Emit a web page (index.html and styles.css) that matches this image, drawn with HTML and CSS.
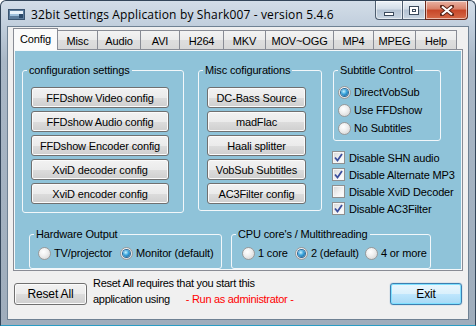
FILE: index.html
```html
<!DOCTYPE html>
<html>
<head>
<meta charset="utf-8">
<link rel="stylesheet" href="styles.css">
</head>
<body>
<div class="window">
  <div class="titlebar">
    <svg class="appicon" width="17" height="11" viewBox="0 0 17 11">
      <rect x="0.5" y="0.5" width="16" height="10" fill="#5c7c9c" stroke="#3a5470"/>
      <rect x="2" y="2" width="13" height="3" fill="#e8f2fb"/>
      <rect x="2" y="5" width="9" height="2" fill="#9fc0dc"/>
      <rect x="11" y="5" width="4" height="4" fill="#2c4a6a"/>
    </svg>
    <span class="title">32bit Settings Application by Shark007 - version 5.4.6</span>
    <div class="caption">
      <span class="cbtn cmin"><i></i></span>
      <span class="cbtn cmax"><i></i></span>
      <span class="cbtn cclose">
        <svg width="14" height="11" viewBox="0 0 14 11"><path d="M2 1.5 L12 9.5 M12 1.5 L2 9.5" stroke="#5a2418" stroke-width="4" stroke-linecap="square"/><path d="M2 1.5 L12 9.5 M12 1.5 L2 9.5" stroke="#fff" stroke-width="2.2"/></svg>
      </span>
    </div>
  </div>
  <div class="client">
    <div class="tabs">
      <span class="tab active">Config</span>
      <span class="tab">Misc</span>
      <span class="tab">Audio</span>
      <span class="tab">AVI</span>
      <span class="tab">H264</span>
      <span class="tab">MKV</span>
      <span class="tab">MOV~OGG</span>
      <span class="tab">MP4</span>
      <span class="tab">MPEG</span>
      <span class="tab">Help</span>
    </div>
    <div class="page">
      <div class="row1">
        <fieldset class="group g-config">
          <legend>configuration settings</legend>
          <div class="btnstack">
            <span class="btn">FFDshow Video config</span>
            <span class="btn">FFDshow Audio config</span>
            <span class="btn">FFDshow Encoder config</span>
            <span class="btn">XviD decoder config</span>
            <span class="btn">XviD encoder config</span>
          </div>
        </fieldset>
        <fieldset class="group g-misc">
          <legend>Misc cofigurations</legend>
          <div class="btnstack">
            <span class="btn">DC-Bass Source</span>
            <span class="btn">madFlac</span>
            <span class="btn">Haali splitter</span>
            <span class="btn">VobSub Subtitles</span>
            <span class="btn">AC3Filter config</span>
          </div>
        </fieldset>
        <div class="rightcol">
          <fieldset class="group g-sub">
            <legend>Subtitle Control</legend>
            <div class="radiolist">
              <label class="opt"><span class="radio on"></span>DirectVobSub</label>
              <label class="opt"><span class="radio"></span>Use FFDshow</label>
              <label class="opt"><span class="radio"></span>No Subtitles</label>
            </div>
          </fieldset>
          <div class="checklist">
            <label class="chkopt"><span class="chk on"><svg width="11" height="11" viewBox="0 0 11 11"><path d="M2 5.5 L4.5 8.5 L9 2" fill="none" stroke="#3b4f9e" stroke-width="1.8"/></svg></span>Disable SHN audio</label>
            <label class="chkopt"><span class="chk on"><svg width="11" height="11" viewBox="0 0 11 11"><path d="M2 5.5 L4.5 8.5 L9 2" fill="none" stroke="#3b4f9e" stroke-width="1.8"/></svg></span>Disable Alternate MP3</label>
            <label class="chkopt"><span class="chk"></span>Disable XviD Decoder</label>
            <label class="chkopt"><span class="chk on"><svg width="11" height="11" viewBox="0 0 11 11"><path d="M2 5.5 L4.5 8.5 L9 2" fill="none" stroke="#3b4f9e" stroke-width="1.8"/></svg></span>Disable AC3Filter</label>
          </div>
        </div>
      </div>
      <div class="row2">
        <fieldset class="group g-hw">
          <legend>Hardware Output</legend>
          <div class="radiorow">
            <label class="opt w-tv"><span class="radio"></span>TV/projector</label>
            <label class="opt"><span class="radio on"></span>Monitor (default)</label>
          </div>
        </fieldset>
        <fieldset class="group g-cpu">
          <legend>CPU core's / Multithreading</legend>
          <div class="radiorow">
            <label class="opt w-1core"><span class="radio"></span>1 core</label>
            <label class="opt w-2core"><span class="radio on"></span>2 (default)</label>
            <label class="opt"><span class="radio"></span>4 or more</label>
          </div>
        </fieldset>
      </div>
    </div>
    <div class="bottom">
      <span class="btn reset">Reset All</span>
      <div class="note">
        <div>Reset All requires that you start this</div>
        <div>application using<span class="red">- Run as administrator -</span></div>
      </div>
      <span class="btn exit">Exit</span>
    </div>
  </div>
</div>
</body>
</html>
```
FILE: styles.css
```css
* { box-sizing: border-box; }
html, body { margin: 0; padding: 0; }
body {
  width: 476px;
  height: 326px;
  overflow: hidden;
  background: #ffffff;
  font-family: "Liberation Sans", Arial, sans-serif;
  font-size: 11px;
  letter-spacing: -0.15px;
  color: #000;
}
.window {
  width: 476px;
  height: 326px;
  border: 1px solid #34465a;
  border-bottom-color: #2a9cc4;
  border-radius: 6px 6px 0 0;
  background: linear-gradient(to bottom, #d3dde8 0px, #c3d0de 22px, #a9b7c6 60px, #9fadbc 100%);
  display: flex;
  flex-direction: column;
}
.titlebar {
  height: 26px;
  display: flex;
  align-items: center;
  padding-left: 7px;
}
.appicon { flex: none; margin-top: 1px; }
.title {
  font-family: "Open Sans", "Noto Sans", sans-serif;
  font-size: 12px;
  margin-left: 6px;
  color: #000;
  white-space: nowrap;
  letter-spacing: 0.15px;
}
.caption {
  margin-left: auto;
  margin-right: 7px;
  align-self: flex-start;
  display: flex;
}
.cbtn {
  height: 19px;
  display: flex;
  align-items: center;
  justify-content: center;
  border: 1px solid #4e5e70;
  border-top: none;
  background: linear-gradient(to bottom, #eef3f8 0%, #d2dde8 45%, #b4c3d3 50%, #c8d5e2 100%);
  box-shadow: inset 0 0 0 1px rgba(255,255,255,0.55);
}
.cmin { width: 27px; border-radius: 0 0 0 4px; border-right: none; }
.cmax { width: 23px; border-right: none; }
.cclose {
  width: 43px;
  border-radius: 0 0 4px 0;
  border-color: #6a2a1c;
  background: linear-gradient(to bottom, #eab3a4 0%, #d98068 45%, #c64628 50%, #d66a48 100%);
}
.cmin i {
  display: block;
  width: 10px;
  height: 4px;
  margin-top: 7px;
  background: #fff;
  border: 1px solid #3b4a5c;
}
.cmax i {
  display: block;
  width: 10px;
  height: 9px;
  background: #fff;
  border: 1px solid #3b4a5c;
  box-shadow: inset 0 0 0 2px #fff, inset 0 0 0 3px #3b4a5c;
  margin-top: 1px;
}
.cclose svg { margin-top: 1px; }

.client {
  margin: 0 7px 0 7px;
  height: 292px;
  background: #f0f0f0;
  box-shadow: 0 0 0 1px #6f8193;
  padding-top: 1px;
  display: flex;
  flex-direction: column;
}
.tabs {
  display: grid;
  grid-template-columns: 45px 40px 43px 39px 44px 42px 68px 40px 42px 41px;
  height: 21px;
  align-items: end;
  padding-left: 5px;
}
.tab {
  height: 19px;
  border: 1px solid #898c95;
  border-bottom: none;
  border-left: none;
  background: linear-gradient(to bottom, #f3f3f3 0%, #ebebeb 50%, #dedede 51%, #d8d8d8 100%);
  display: flex;
  align-items: center;
  justify-content: center;
  padding-top: 1px;
}
.tab.active {
  height: 22px;
  margin-bottom: -1px;
  position: relative;
  z-index: 1;
  background: #fbfbfb;
  border-left: 1px solid #898c95;
  padding-top: 0;
  padding-bottom: 2px;
}
.page {
  margin: 0 5px 0 5px;
  height: 222px;
  border: 1px solid #898c95;
  background: #8fc3d9;
  box-shadow: inset 0 0 0 1px #f4f8fa;
  padding-top: 14px;
}
.group {
  margin: 0;
  padding: 0;
  border: 1px solid #f2f7fa;
  border-radius: 3px;
  min-width: 0;
}
.group legend {
  padding: 0 2px;
  margin-left: 4px;
  line-height: 13px;
}
.row1 {
  display: flex;
  padding-left: 8px;
}
.g-config { width: 162px; height: 149px; }
.g-misc { width: 124px; height: 147px; margin-left: 14px; }
.btnstack {
  display: flex;
  flex-direction: column;
  gap: 3px;
  padding: 10px 0 0 8px;
}
.g-config .btn { width: 138px; }
.g-misc .btn { width: 99px; }
.btn {
  height: 21px;
  display: flex;
  align-items: center;
  justify-content: center;
  border: 1px solid #707070;
  border-radius: 3px;
  background: linear-gradient(to bottom, #f2f2f2 0%, #ebebeb 50%, #dddddd 51%, #cfcfcf 100%);
  box-shadow: inset 0 0 0 1px #fbfbfb;
  white-space: nowrap;
}
.rightcol {
  margin-left: 11px;
  width: 110px;
}
.g-sub { width: 108px; height: 77px; }
.radiolist {
  display: flex;
  flex-direction: column;
  padding: 6px 0 0 4px;
}
.opt {
  display: flex;
  align-items: center;
  height: 18px;
  white-space: nowrap;
}
.radio {
  flex: none;
  width: 13px;
  height: 13px;
  border-radius: 50%;
  border: 1px solid #9a9a9a;
  background: radial-gradient(circle at 40% 35%, #ffffff 0%, #f0f0f0 40%, #cfcfcf 100%);
  margin-right: 3px;
  display: flex;
  align-items: center;
  justify-content: center;
}
.radio.on::after {
  content: "";
  width: 7px;
  height: 7px;
  border-radius: 50%;
  background: radial-gradient(circle at 40% 35%, #c9f3ff 0%, #39a3dc 45%, #0b4f85 100%);
  box-shadow: 0 0 0 1px #2a6a9a;
}
.checklist {
  margin-top: 8px;
  margin-left: -1px;
  display: flex;
  flex-direction: column;
}
.chkopt {
  display: flex;
  align-items: center;
  height: 17px;
  white-space: nowrap;
}
.chk {
  flex: none;
  width: 13px;
  height: 13px;
  border: 1px solid #8e8f8f;
  background: linear-gradient(135deg, #d6d6d6 0%, #f4f4f4 60%, #ffffff 100%);
  box-shadow: inset 0 0 0 1px #f7f7f7;
  margin-right: 4px;
  display: flex;
  align-items: center;
  justify-content: center;
}
.chk svg { display: block; }
.row2 {
  display: flex;
  margin-top: 11px;
  padding-left: 15px;
}
.g-hw { width: 193px; height: 41px; }
.g-cpu { width: 200px; height: 41px; margin-left: 9px; }
.radiorow {
  display: flex;
  padding-top: 3px;
}
.g-hw .radiorow { padding-left: 8px; }
.g-cpu .radiorow { padding-left: 10px; }
.w-tv { width: 82px; }
.w-1core { width: 53px; }
.w-2core { width: 70px; }

.bottom {
  display: flex;
  align-items: flex-start;
  margin-top: 4px;
  padding-left: 6px;
}
.reset {
  width: 73px;
  height: 22px;
  margin-top: 8px;
  font-size: 12px;
}
.note {
  margin-left: 6px;
  line-height: 16px;
  font-size: 11px;
  letter-spacing: -0.3px;
}
.red {
  color: #ff0000;
  margin-left: 16px;
}
.exit {
  width: 72px;
  height: 22px;
  margin-top: 8px;
  margin-left: auto;
  margin-right: 6px;
  font-size: 12px;
  border-color: #3c7fb1;
  background: linear-gradient(to bottom, #eaf6fd 0%, #d9f0fc 50%, #bee6fd 51%, #a7d9f5 100%);
  box-shadow: inset 0 0 0 1px #7fe0ff, 0 0 1px #3c7fb1;
}
```
